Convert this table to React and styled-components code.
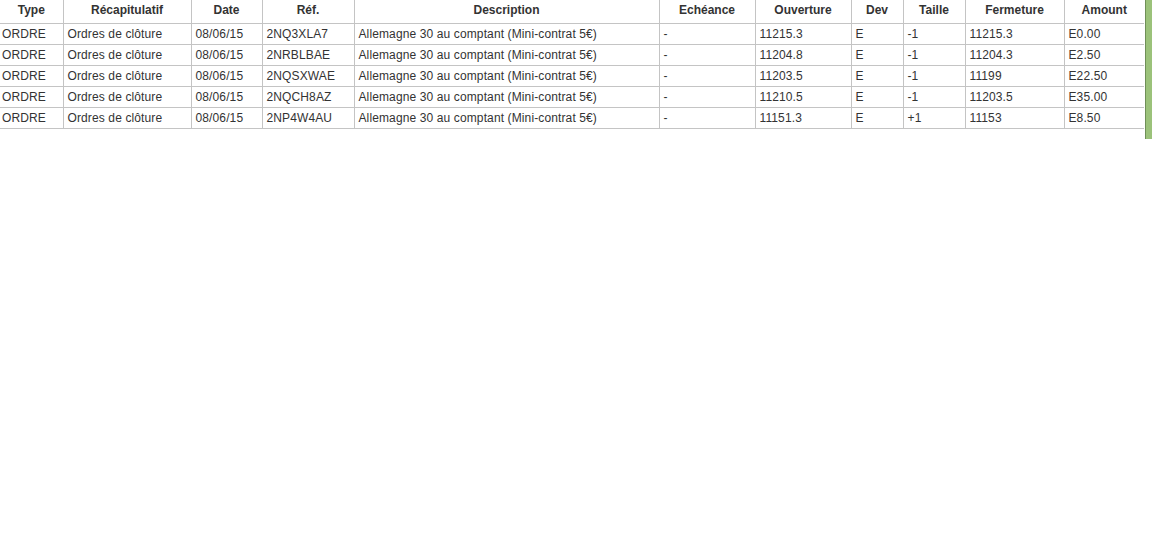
import React from 'react'
import styled, {createGlobalStyle} from 'styled-components'

const GlobalStyle = createGlobalStyle`
  body {
    margin: 0;
    background: #fff;
    font-family: "Liberation Sans", Arial, sans-serif;
  }
`

const Page = styled.div`
  display: flex;
  align-items: flex-start;
  width: 1152px;
  height: 540px;
  background: #fff;
`

const TableWrap = styled.div`
  width: 1145px;
`

const Table = styled.table`
  width: 1144px;
  table-layout: fixed;
  border-collapse: collapse;
  font-size: 12px;
  color: #333;
`

const Th = styled.th`
  height: 23px;
  padding: 1px 4px 3px;
  box-sizing: border-box;
  font-weight: bold;
  text-align: center;
  line-height: 18px;
  border-left: 1px solid #c4c4c4;
  border-bottom: 1px solid #c4c4c4;
  white-space: nowrap;
  vertical-align: middle;
  &:first-child { border-left: none; }
`

const Td = styled.td`
  height: 20px;
  padding: 0 4px;
  letter-spacing: 0.12px;
  border-left: 1px solid #c4c4c4;
  border-bottom: 1px solid #c4c4c4;
  white-space: nowrap;
  overflow: hidden;
  vertical-align: middle;
  &:first-child { border-left: none; padding-left: 2px; }
`

const SideBar = styled.div`
  width: 7px;
  height: 139px;
  background: #9bc27a;
  border-left: 1px solid #6f8f58;
  box-sizing: border-box;
`

const widths = [63, 128, 71, 92, 305, 96, 96, 52, 62, 99, 80]
const heads = ['Type', 'Récapitulatif', 'Date', 'Réf.', 'Description', 'Echéance', 'Ouverture', 'Dev', 'Taille', 'Fermeture', 'Amount']

const rows = [
  ['2NQ3XLA7', '11215.3', '-1', '11215.3', 'E0.00'],
  ['2NRBLBAE', '11204.8', '-1', '11204.3', 'E2.50'],
  ['2NQSXWAE', '11203.5', '-1', '11199', 'E22.50'],
  ['2NQCH8AZ', '11210.5', '-1', '11203.5', 'E35.00'],
  ['2NP4W4AU', '11151.3', '+1', '11153', 'E8.50'],
]

export default function App () {
  return (
    <Page>
      <GlobalStyle />
      <TableWrap>
        <Table>
          <colgroup>
            {widths.map((w, i) => <col key={i} style={{width: w}} />)}
          </colgroup>
          <thead>
            <tr>
              {heads.map(h => <Th key={h}>{h}</Th>)}
            </tr>
          </thead>
          <tbody>
            {rows.map(([ref, open, size, close, amount]) => (
              <tr key={ref}>
                <Td>ORDRE</Td>
                <Td>Ordres de clôture</Td>
                <Td>08/06/15</Td>
                <Td>{ref}</Td>
                <Td>Allemagne 30 au comptant (Mini-contrat 5€)</Td>
                <Td>-</Td>
                <Td>{open}</Td>
                <Td>E</Td>
                <Td>{size}</Td>
                <Td>{close}</Td>
                <Td>{amount}</Td>
              </tr>
            ))}
          </tbody>
        </Table>
      </TableWrap>
      <SideBar />
    </Page>
  )
}
